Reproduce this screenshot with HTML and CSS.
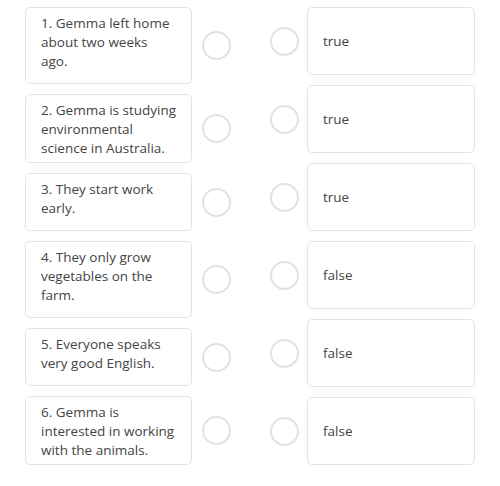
FILE: index.html
```html
<!DOCTYPE html>
<html lang="en">
<head>
    <meta charset="UTF-8">
    <title>Matching</title>
    <link rel="stylesheet" href="styles.css">
</head>
<body>
<div id="board">
    <ul class="col col-left">
        <li class="item"><div class="card card-lg">1. Gemma left home<br>about two weeks<br>ago.</div><span class="dot"></span></li>
        <li class="item"><div class="card">2. Gemma is studying<br>environmental<br>science in Australia.</div><span class="dot"></span></li>
        <li class="item"><div class="card card-sm">3. They start work<br>early.</div><span class="dot"></span></li>
        <li class="item"><div class="card card-lg">4. They only grow<br>vegetables on the<br>farm.</div><span class="dot"></span></li>
        <li class="item"><div class="card card-sm">5. Everyone speaks<br>very good English.</div><span class="dot"></span></li>
        <li class="item"><div class="card">6. Gemma is<br>interested in working<br>with the animals.</div><span class="dot"></span></li>
    </ul>
    <ul class="col col-right">
        <li class="item"><span class="dot"></span><div class="answer">true</div></li>
        <li class="item"><span class="dot"></span><div class="answer">true</div></li>
        <li class="item"><span class="dot"></span><div class="answer">true</div></li>
        <li class="item"><span class="dot"></span><div class="answer">false</div></li>
        <li class="item"><span class="dot"></span><div class="answer">false</div></li>
        <li class="item"><span class="dot"></span><div class="answer">false</div></li>
    </ul>
</div>
</body>
</html>
```

FILE: styles.css
```css
*{
    margin: 0;
    padding: 0;
    box-sizing: border-box;
}
ul,ol{
    list-style: none;
}
body{
    background: #fff;
    font-family: "Open Sans", "Liberation Sans", sans-serif;
    font-size: 13.5px;
    color: #444;
}
#board{
    display: flex;
    padding: 7px 0 0 25px;
    gap: 39px;
}
.col{
    display: flex;
    flex-direction: column;
    gap: 10px;
}
.item{
    display: flex;
    align-items: center;
}
.col-left .item{
    gap: 10px;
}
.col-right .item{
    gap: 8px;
}
.card{
    width: 167px;
    height: 69px;
    padding: 6px 6px 0 15px;
    border: 1px solid #e4e4e4;
    border-radius: 5px;
    line-height: 18.8px;
    background: #fff;
}
.card-lg{
    height: 77px;
}
.card-sm{
    height: 58px;
}
.dot{
    width: 29px;
    height: 29px;
    border: 2.5px solid #e2e2e2;
    border-radius: 50%;
    flex-shrink: 0;
}
.answer{
    width: 168px;
    height: 68px;
    padding-left: 15px;
    border: 1px solid #e4e4e4;
    border-radius: 5px;
    display: flex;
    align-items: center;
    background: #fff;
}
```
